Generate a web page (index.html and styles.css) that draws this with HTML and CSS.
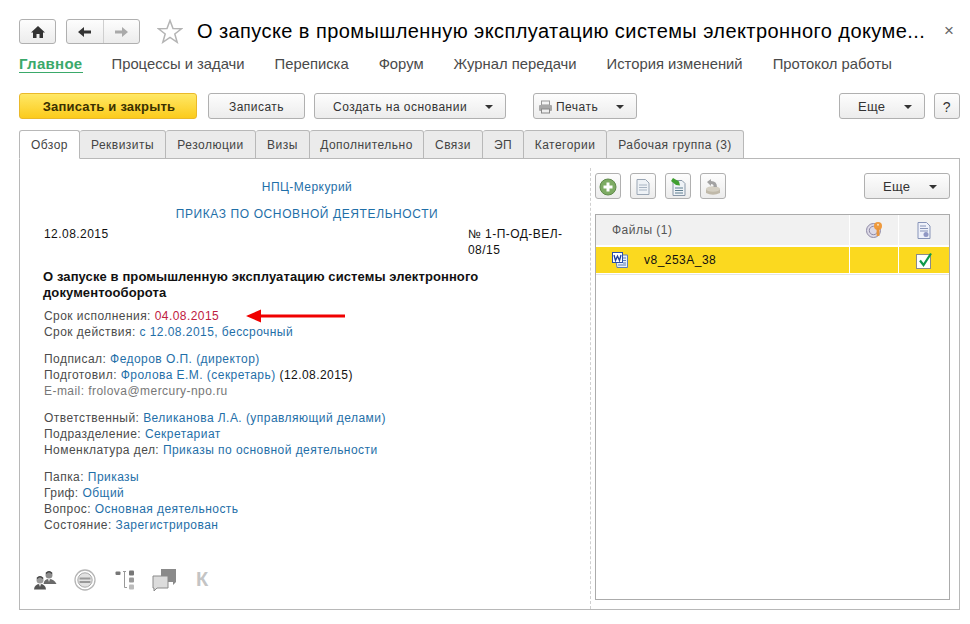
FILE: index.html
```html
<!DOCTYPE html>
<html lang="ru">
<head>
<meta charset="utf-8">
<title>О запуске</title>
<link rel="stylesheet" href="styles.css">
</head>
<body>
<div class="page">
  <header class="head">
    <button class="btn nav-home"><svg width="16" height="14" viewBox="0 0 16 14"><path d="M8 1 L15 7.500 H13 V13 H9.500 V9 H6.500 V13 H3 V7.500 H1 Z" fill="#333"/></svg></button>
    <div class="btn nav-pair">
      <span class="nav-half"><svg width="15" height="12" viewBox="0 0 15 12"><path d="M1 6 L7 1 V4.500 H14 V7.500 H7 V11 Z" fill="#333"/></svg></span>
      <span class="nav-half"><svg width="15" height="12" viewBox="0 0 15 12"><path d="M14 6 L8 1 V4.500 H1 V7.500 H8 V11 Z" fill="#aaa"/></svg></span>
    </div>
    <svg class="star" width="26" height="25" viewBox="0 0 26 25"><path d="M13 1.500 L16 9.500 L24.500 9.800 L17.800 15 L20.200 23.300 L13 18.500 L5.800 23.300 L8.200 15 L1.500 9.800 L10 9.500 Z" fill="#fff" stroke="#b4b4b4" stroke-width="1.500"/></svg>
    <h1 class="title">О запуске в промышленную эксплуатацию системы электронного докуме...</h1>
    <span class="close">×</span>
  </header>

  <nav class="nav">
    <a class="nav-item active">Главное</a>
    <a class="nav-item">Процессы и задачи</a>
    <a class="nav-item">Переписка</a>
    <a class="nav-item">Форум</a>
    <a class="nav-item">Журнал передачи</a>
    <a class="nav-item">История изменений</a>
    <a class="nav-item">Протокол работы</a>
  </nav>

  <div class="toolbar">
    <button class="btn primary w178">Записать и закрыть</button>
    <button class="btn w97">Записать</button>
    <button class="btn w192 drop"><span>Создать на основании</span><i class="caret"></i></button>
    <button class="btn w104 drop print">
      <span class="print-label"><svg width="15" height="14" viewBox="0 0 15 14"><rect x="3.500" y="1" width="8" height="4" fill="#f4f4f4" stroke="#999"/><rect x="1" y="5" width="13" height="6" rx="1" fill="#a8a8a8"/><rect x="3.500" y="9" width="8" height="4" fill="#eee" stroke="#888"/></svg>Печать</span><i class="caret"></i>
    </button>
    <button class="btn w86 drop more"><span>Еще</span><i class="caret"></i></button>
    <button class="btn w26">?</button>
  </div>

  <div class="tabs">
    <span class="tab active t61">Обзор</span>
    <span class="tab t86">Реквизиты</span>
    <span class="tab t90">Резолюции</span>
    <span class="tab t54">Визы</span>
    <span class="tab t114">Дополнительно</span>
    <span class="tab t59">Связи</span>
    <span class="tab t41">ЭП</span>
    <span class="tab t83">Категории</span>
    <span class="tab t137">Рабочая группа (3)</span>
  </div>

  <main class="panel">
    <section class="doc">
      <div class="doc-body">
        <p class="org">НПЦ-Меркурий</p>
        <p class="kind">ПРИКАЗ ПО ОСНОВНОЙ ДЕЯТЕЛЬНОСТИ</p>
        <div class="meta">
          <span>12.08.2015</span>
          <span class="num">№ 1-П-ОД-ВЕЛ-<wbr>08/15</span>
        </div>
        <h2 class="subject">О запуске в промышленную эксплуатацию системы электронного документооборота</h2>
        <div class="group first">
          <div class="row">Срок исполнения: <b class="red">04.08.2015</b></div>
          <div class="row">Срок действия: <a>с 12.08.2015, бессрочный</a></div>
        </div>
        <div class="group">
          <div class="row">Подписал: <a>Федоров О.П. (директор)</a></div>
          <div class="row">Подготовил: <a>Фролова Е.М. (секретарь)</a> <span class="black">(12.08.2015)</span></div>
          <div class="row grey">E-mail: frolova@mercury-npo.ru</div>
        </div>
        <div class="group">
          <div class="row">Ответственный: <a>Великанова Л.А. (управляющий делами)</a></div>
          <div class="row">Подразделение: <a>Секретариат</a></div>
          <div class="row">Номенклатура дел: <a>Приказы по основной деятельности</a></div>
        </div>
        <div class="group">
          <div class="row">Папка: <a>Приказы</a></div>
          <div class="row">Гриф: <a>Общий</a></div>
          <div class="row">Вопрос: <a>Основная деятельность</a></div>
          <div class="row">Состояние: <a>Зарегистрирован</a></div>
        </div>
      </div>
      <div class="doc-icons">
        <svg width="24" height="20" viewBox="0 0 24 20"><circle cx="16" cy="5" r="3.500" fill="#8c8c8c"/><path d="M13 3.500 Q16 0 19 3.500" fill="none" stroke="#444" stroke-width="1.500"/><path d="M10.500 14 Q11 9 16 9 Q21 9 23.500 14 Z" fill="#6a6a6a"/><path d="M15 9 H17 L16 12 Z" fill="#eee"/><circle cx="7" cy="10" r="3.500" fill="#9a9a9a"/><path d="M4 8.500 Q7 5 10 8.500" fill="none" stroke="#444" stroke-width="1.500"/><path d="M1 19.500 Q1.500 14 7 14 Q12.500 14 13 19.500 Z" fill="#555"/><path d="M6 14 H8 L7 17 Z" fill="#eee"/></svg>
        <svg class="ic-tight" width="22" height="22" viewBox="0 0 22 22"><circle cx="11" cy="11" r="10" fill="#fff" stroke="#b5b5b5" stroke-width="1.300"/><circle cx="11" cy="11" r="7.200" fill="#e2e2e2" stroke="#aaa"/><path d="M5.500 9.500 H16.500 M5.500 13 H16.500" stroke="#999" stroke-width="2"/></svg>
        <svg class="ic-wide" width="20" height="20" viewBox="0 0 20 20"><rect x="0.500" y="1.500" width="5" height="3.500" rx="1" fill="#777"/><path d="M8 1.500 H11 M9.500 1.500 V17.500 H12" fill="none" stroke="#999"/><rect x="14" y="0.500" width="5" height="5" rx="1" fill="#777"/><rect x="14" y="7.500" width="5" height="5" rx="1" fill="#999"/><rect x="14" y="14.500" width="5" height="5" rx="1" fill="#bbb"/></svg>
        <svg width="25" height="24" viewBox="0 0 25 24"><path d="M9 1 H24 V14 L21 17 V14 H9 Z" fill="#8a8a8a"/><path d="M1 8 H16 V20 H5 L2 23 V20 H1 Z" fill="#dcdcdc" stroke="#8a8a8a"/></svg>
        <span class="k">К</span>
      </div>
    </section>
    <section class="files">
      <div class="files-bar">
        <button class="btn sq"><svg width="18" height="18" viewBox="0 0 18 18"><circle cx="9" cy="9" r="8" fill="#7dab63" stroke="#5f8a4a"/><path d="M9 4.500 V13.500 M4.500 9 H13.500" stroke="#fff" stroke-width="3"/></svg></button>
        <button class="btn sq"><svg width="14" height="16" viewBox="0 0 14 16"><path d="M1 .5 H9.500 L13 4 V15.500 H1 Z" fill="#eef2f6" stroke="#9aa6b4"/><path d="M3 6 H11 M3 8.500 H11 M3 11 H11" stroke="#a8b4c2"/></svg></button>
        <button class="btn sq"><svg width="17" height="18" viewBox="0 0 17 18"><path d="M3 2.500 H12 L15 5.500 V17.500 H3 Z" fill="#eef2f6" stroke="#8a98a8"/><path d="M5 10 H13 M5 12.500 H13 M5 15 H13" stroke="#5f7f90"/><path d="M3 0 L9 3.500 L10 7.500 L6 7 L1 3 Z" fill="#3f9f2f"/></svg></button>
        <button class="btn sq"><svg width="18" height="18" viewBox="0 0 18 18"><path d="M2 11 Q9 7.500 16 11 V15 Q9 18.500 2 15 Z" fill="#c0b9a9"/><ellipse cx="9" cy="11" rx="7" ry="2.800" fill="#d4cfc2"/><path d="M3 4 L7 1 V3 Q13 3 13 9 H9.500 Q10 6 7 6 V8 Z" fill="#a2a2a2"/></svg></button>
        <button class="btn w86 drop files-more"><span>Еще</span><i class="caret"></i></button>
      </div>
      <div class="grid">
        <div class="grid-head">
          <span class="col-name">Файлы (1)</span>
          <span class="col-a"><svg width="17" height="18" viewBox="0 0 17 18"><circle cx="7.500" cy="9.500" r="7" fill="#dcd9e6" stroke="#8f8aa6"/><circle cx="7.500" cy="9.500" r="4.200" fill="none" stroke="#8f8aa6"/><circle cx="12" cy="5" r="4" fill="#ef9a3d"/><circle cx="12" cy="3.800" r="1" fill="#fbe2bf"/><rect x="10.600" y="7" width="2.800" height="8" fill="#e8943a"/></svg></span>
          <span class="col-b"><svg width="14" height="17" viewBox="0 0 14 17"><path d="M1 .5 H9.500 L13 4 V16.500 H1 Z" fill="#eef1fa" stroke="#8794b8"/><path d="M3 4 H9 M3 6.500 H11 M3 9 H11" stroke="#8794b8"/><circle cx="9" cy="12.500" r="2.500" fill="#8f97c4"/></svg></span>
        </div>
        <div class="grid-row">
          <span class="col-name file"><svg width="16" height="16" viewBox="0 0 16 16"><path d="M3 3 H15.500 V15.500 H5 Z" fill="#e8eef8" stroke="#5d7fb8"/><path d="M11 6 H14 M11 8.500 H14 M11 11 H14 M6 13 H14" stroke="#5d7fb8"/><rect x=".5" y=".5" width="10" height="10" fill="#fff" stroke="#2a4fa8"/><path d="M2 3 L3.500 8.500 L5.500 4 L7.500 8.500 L9 3" fill="none" stroke="#1c3f9c" stroke-width="1.300"/></svg><span>v8_253A_38</span></span>
          <span class="col-a"></span>
          <span class="col-b"><svg width="17" height="17" viewBox="0 0 17 17"><rect x=".5" y="2.500" width="14" height="14" fill="#fff" stroke="#8a8a8a"/><path d="M4 8.500 L7.500 13 L15 1.500" fill="none" stroke="#0f9a4a" stroke-width="2.200"/></svg></span>
        </div>
      </div>
    </section>
    <svg class="arrow" width="99" height="14" viewBox="0 0 99 14"><path d="M0 7 L15 0.500 V5.500 H99 V8.500 H15 V13.500 Z" fill="#f00000"/></svg>
  </main>
</div>
</body>
</html>
```

FILE: styles.css
```css
* { box-sizing: border-box; }
html, body { margin: 0; padding: 0; background: #fff; }
body { font-family: "Liberation Sans", Arial, sans-serif; font-size: 12px; color: #333; }
.page { width: 970px; height: 624px; padding: 19px 10px 0 19px; overflow: hidden; }

.btn {
  display: inline-flex; align-items: center; justify-content: center;
  height: 26px; padding: 1px 0 0; margin: 0;
  font: 12px "Liberation Sans", Arial, sans-serif; letter-spacing: .48px; color: #333;
  background: linear-gradient(#fdfdfd, #ececec);
  border: 1px solid #b0b0b0; border-radius: 3px;
}

.head { display: flex; align-items: center; height: 25px; }
.nav-home { width: 37px; height: 25px; }
.nav-pair { width: 74px; height: 25px; margin-left: 10px; padding: 0; }
.nav-half { flex: 1; height: 100%; display: flex; align-items: center; justify-content: center; }
.nav-half + .nav-half { border-left: 1px solid #cfcfcf; }
.star { margin-left: 17px; flex: none; }
.title { margin: 0 0 0 14px; font-size: 20px; font-weight: 400; color: #000; white-space: nowrap; width: 735px; letter-spacing: .42px; }
.close { margin-left: 12px; font-size: 17px; color: #666; line-height: 1; position: relative; top: -1px; }

.nav { display: flex; gap: 30px; height: 24px; margin-top: 8px; font-size: 14.8px; align-items: center; }
.nav-item { color: #4a4a4a; white-space: nowrap; }
.nav-item.active { color: #3aa96a; font-size: 15px; font-weight: 700; letter-spacing: .3px; border-bottom: 1px solid #3aa96a; margin-right: -1px; }

.toolbar { display: flex; margin-top: 17px; height: 26px; }
.primary { padding-left: 2px; font-size: 13px; font-weight: 700; letter-spacing: .2px; background: linear-gradient(#ffe866, #fbcb1c); border-color: #eab92a; color: #3a3000; }
.w178 { width: 178px; }
.w97 { width: 97px; margin-left: 11px; }
.w192 { width: 192px; margin-left: 9px; }
.w104 { width: 104px; margin-left: 27px; }
.w86 { width: 86px; }
.more { margin-left: 202px; }
.w26 { width: 26px; margin-left: 9px; font-size: 14px; }
.drop { justify-content: space-between; padding: 1px 12px 0 18px; }
.print { padding-left: 4px; }
.print-label { display: flex; align-items: center; gap: 3px; }
.more, .files-more { padding-left: 18px; font-size: 13px; letter-spacing: .3px; }
.caret { width: 0; height: 0; border: 4px solid transparent; border-top: 4px solid #333; border-bottom: 0; }

.tabs { display: flex; margin-top: 11px; height: 29px; position: relative; z-index: 1; }
.tab {
  display: flex; align-items: center; justify-content: center; height: 29px;
  background: #ebebeb; border: 1px solid #b8b8b8; border-left: 0; border-radius: 3px 3px 0 0;
  letter-spacing: .48px; color: #444;
}
.tab.active { background: #fff; border-left: 1px solid #b8b8b8; border-bottom-color: #fff; }
.t61 { width: 61px; } .t86 { width: 86px; } .t90 { width: 90px; } .t54 { width: 54px; }
.t114 { width: 114px; } .t59 { width: 59px; } .t41 { width: 41px; } .t83 { width: 83px; } .t137 { width: 137px; }

.panel { position: relative; display: flex; width: 941px; height: 452px; margin-top: -1px; border: 1px solid #b8b8b8; }
.doc { width: 571px; display: flex; flex-direction: column; border-right: 1px dashed #d0d0d0; margin-top: 9px; }
.doc-body { padding: 11px 0 0 24px; flex: 1; letter-spacing: .45px; line-height: 16px; color: #4b4b4b; }
.doc-body p { margin: 0; text-align: center; color: #1f6fa8; padding-right: 20px; }
.kind { margin-top: 11px !important; letter-spacing: .6px; }
.meta { display: flex; margin-top: 4px; color: #111; }
.meta > span:first-child { width: 424px; }
.num { width: 102px; }
.subject { margin: 11px 0 0 -1px; width: 470px; font-size: 13px; line-height: 16px; font-weight: 700; color: #111; letter-spacing: .1px; }
.group { margin-top: 11px; }
.group.first { margin-top: 7px; }
.row { white-space: nowrap; }
.row a { color: #1f6fa8; }
.red { font-weight: 400; color: #c0203f; }
.black { color: #111; }
.grey { color: #777; }
.doc-icons { display: flex; align-items: center; gap: 18px; padding: 0 0 19px 13px; height: 40px; }
.ic-tight { margin-left: -1px; }
.ic-wide { margin-left: 1px; margin-right: -1px; }
.k { font-size: 20px; font-weight: 700; color: #c4c4c4; margin-left: 1px; }

.files { flex: 1; display: flex; flex-direction: column; padding: 14px 9px 9px 4px; }
.files-bar { display: flex; align-items: center; gap: 9px; height: 26px; }
.sq { width: 26px; }
.files-more { margin-left: auto; }
.grid { flex: 1; margin-top: 15px; border: 1px solid #ababab; }
.grid-head, .grid-row { display: flex; }
.grid-head { height: 32px; background: #f1f1f1; border-bottom: 2px solid #fff; color: #555; letter-spacing: .48px; }
.grid-row { height: 26px; background: #fbd91f; color: #111; letter-spacing: .48px; box-shadow: 0 1px 0 #fff, 0 2px 0 #e4e4e4; }
.col-name { width: 253px; display: flex; align-items: center; padding-left: 16px; }
.col-a, .col-b { display: flex; align-items: center; justify-content: center; border-left: 1px solid #fff; }
.col-a { width: 49px; }
.col-b { flex: 1; }
.file { gap: 16px; }
.arrow { position: absolute; left: 226px; top: 150px; }
```
